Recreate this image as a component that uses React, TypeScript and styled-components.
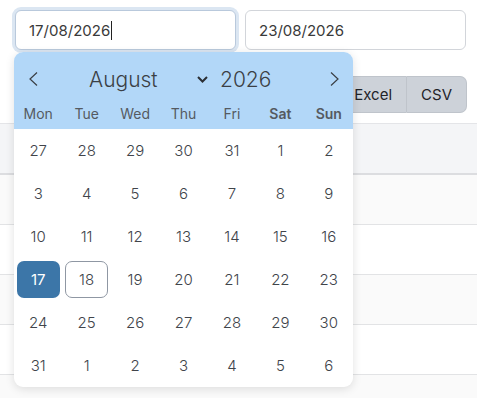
import styled, { createGlobalStyle, css } from 'styled-components';

const GlobalStyle = createGlobalStyle`
  html, body {
    margin: 0;
    padding: 0;
    background: #ffffff;
    font-family: Inter, 'Noto Sans', sans-serif;
    color: #333;
  }
`;

const WEEKDAYS = [
  { label: 'Mon', weekend: false },
  { label: 'Tue', weekend: false },
  { label: 'Wed', weekend: false },
  { label: 'Thu', weekend: false },
  { label: 'Fri', weekend: false },
  { label: 'Sat', weekend: true },
  { label: 'Sun', weekend: true },
];

const DAYS = [
  27, 28, 29, 30, 31, 1, 2,
  3, 4, 5, 6, 7, 8, 9,
  10, 11, 12, 13, 14, 15, 16,
  17, 18, 19, 20, 21, 22, 23,
  24, 25, 26, 27, 28, 29, 30,
  31, 1, 2, 3, 4, 5, 6,
];

const Page = styled.div`
  position: relative;
  width: 477px;
  height: 398px;
  overflow: hidden;
  padding-top: 10px;
  box-sizing: border-box;
`;

const FilterRow = styled.div`
  display: flex;
  gap: 9px;
  padding: 0 11px 0 15px;
`;

const DateInput = styled.div<{ $focused?: boolean }>`
  flex: 1;
  height: 40px;
  box-sizing: border-box;
  border: 1px solid #d2d5da;
  border-radius: 6px;
  padding: 0 13px;
  display: flex;
  align-items: center;
  font-size: 15px;
  color: #3a3a3a;
  background: #fff;
  ${(p) =>
    p.$focused &&
    css`
      border-color: #b9c9dc;
      box-shadow: 0 0 0 3px #dbe6f2;
    `}
`;

const Caret = styled.span`
  display: inline-block;
  width: 1px;
  height: 19px;
  margin-left: 1px;
  background: #222;
`;

const ExportRow = styled.div`
  display: flex;
  justify-content: flex-end;
  padding-right: 10px;
  margin-top: 26px;
`;

const ExportButton = styled.button<{ $last?: boolean }>`
  height: 37px;
  padding: 0 14px;
  border: 1px solid #bfc4cb;
  border-left-width: ${(p) => (p.$last ? '0' : '1px')};
  border-radius: ${(p) => (p.$last ? '0 7px 7px 0' : '7px 0 0 7px')};
  background: #cdd2d9;
  font-family: Inter, 'Noto Sans', sans-serif;
  font-size: 15px;
  color: #1f2329;
`;

const Table = styled.div`
  margin-top: 10px;
  border-top: 1px solid #e4e5e8;
`;

const HeaderRow = styled.div`
  height: 49px;
  background: #f4f5f7;
  border-bottom: 2px solid #dcdde0;
`;

const BodyRow = styled.div<{ $striped?: boolean }>`
  height: 49px;
  background: ${(p) => (p.$striped ? '#fafafa' : '#ffffff')};
  border-bottom: 1px solid #e2e3e5;
`;

const Calendar = styled.div`
  position: absolute;
  top: 52px;
  left: 14px;
  width: 339px;
  background: #fff;
  border-radius: 9px;
  overflow: hidden;
  box-shadow: 0 2px 10px rgba(0, 0, 0, 0.12);
`;

const CalendarHead = styled.div`
  background: #b2d7f8;
  padding-top: 12px;
  height: 77px;
  box-sizing: border-box;
`;

const NavRow = styled.div`
  display: flex;
  align-items: center;
  height: 30px;
  padding: 0 12px;
  color: #3b3f45;
`;

const NavButton = styled.span`
  display: flex;
  width: 14px;
  justify-content: center;
`;

const MonthSelect = styled.div`
  display: flex;
  align-items: center;
  justify-content: space-between;
  width: 119px;
  margin-left: 49px;
  font-size: 21px;
  font-weight: 300;
`;

const Year = styled.span`
  margin-left: 12px;
  font-size: 21px;
  font-weight: 300;
`;

const Spacer = styled.span`
  flex: 1;
`;

const Grid = styled.div`
  display: grid;
  grid-template-columns: repeat(7, 1fr);
`;

const WeekdayCell = styled.div<{ $weekend?: boolean }>`
  height: 22px;
  margin-top: 11px;
  text-align: center;
  font-size: 14px;
  color: #555a61;
  font-weight: ${(p) => (p.$weekend ? 600 : 400)};
`;

const DayCell = styled.div`
  height: 43px;
  display: flex;
  align-items: center;
  justify-content: center;
`;

const DayNumber = styled.span<{ $variant?: 'selected' | 'today' }>`
  width: 43px;
  height: 37px;
  box-sizing: border-box;
  display: flex;
  align-items: center;
  justify-content: center;
  border-radius: 7px;
  font-size: 15px;
  font-weight: 300;
  color: #40444a;
  ${(p) =>
    p.$variant === 'selected' &&
    css`
      background: #3c76a8;
      color: #fff;
      font-weight: 400;
    `}
  ${(p) =>
    p.$variant === 'today' &&
    css`
      border: 1px solid #8f97a3;
    `}
`;

const Chevron = ({ dir }: { dir: 'left' | 'right' }) => (
  <svg width="9" height="14" viewBox="0 0 9 14" fill="none">
    <polyline
      points={dir === 'left' ? '8,0.5 1,7 8,13.5' : '1,0.5 8,7 1,13.5'}
      stroke="#3b3f45"
      strokeWidth="1.2"
    />
  </svg>
);

const DropArrow = () => (
  <svg width="11" height="7" viewBox="0 0 11 7" fill="none">
    <polyline points="1,1 5.5,5.5 10,1" stroke="#2b2f35" strokeWidth="2" />
  </svg>
);

const App = () => {
  return (
    <>
      <GlobalStyle />
      <Page>
        <FilterRow>
          <DateInput $focused>
            17/08/2026
            <Caret />
          </DateInput>
          <DateInput>23/08/2026</DateInput>
        </FilterRow>
        <ExportRow>
          <ExportButton>Excel</ExportButton>
          <ExportButton $last>CSV</ExportButton>
        </ExportRow>
        <Table>
          <HeaderRow />
          <BodyRow $striped />
          <BodyRow />
          <BodyRow $striped />
          <BodyRow />
          <BodyRow $striped />
        </Table>

        <Calendar>
          <CalendarHead>
            <NavRow>
              <NavButton>
                <Chevron dir="left" />
              </NavButton>
              <MonthSelect>
                August
                <DropArrow />
              </MonthSelect>
              <Year>2026</Year>
              <Spacer />
              <NavButton>
                <Chevron dir="right" />
              </NavButton>
            </NavRow>
            <Grid>
              {WEEKDAYS.map((d) => (
                <WeekdayCell key={d.label} $weekend={d.weekend}>
                  {d.label}
                </WeekdayCell>
              ))}
            </Grid>
          </CalendarHead>
          <Grid>
            {DAYS.map((day, i) => (
              <DayCell key={i}>
                <DayNumber $variant={i === 21 ? 'selected' : i === 22 ? 'today' : undefined}>
                  {day}
                </DayNumber>
              </DayCell>
            ))}
          </Grid>
        </Calendar>
      </Page>
    </>
  );
};

export default App;
